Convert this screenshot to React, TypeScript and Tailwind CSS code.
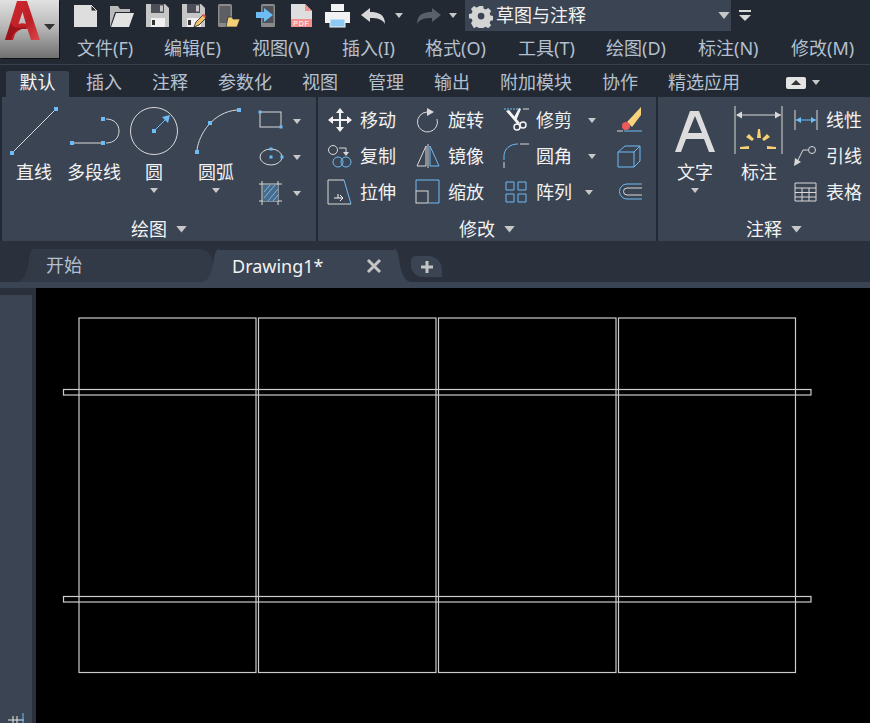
import type { ReactNode } from "react";

const blue = "#6cbcf5";
const grey = "#d9d9d9";

function Caret({ className = "", size = 8 }: { className?: string; size?: number }) {
  return (
    <svg width={size} height={size / 2 + 1} viewBox="0 0 8 5" className={className}>
      <path d="M0 0h8L4 5z" fill="#c8c8c8" />
    </svg>
  );
}

function Dot({ x, y, s = 4 }: { x: number; y: number; s?: number }) {
  return <rect x={x - s / 2} y={y - s / 2} width={s} height={s} fill={blue} />;
}

function Logo() {
  return (
    <div className="relative h-[58px] w-[59px] shrink-0 bg-gradient-to-b from-[#e2e2e2] via-[#b4b4b4] to-[#707070] shadow-[1px_1px_0_#111]">
      <svg width="46" height="44" viewBox="0 0 46 44" className="absolute left-0 top-0">
        <defs>
          <linearGradient id="logoA" x1="0" y1="0" x2="1" y2="1">
            <stop offset="0" stopColor="#d22a30" />
            <stop offset="0.6" stopColor="#bd1f26" />
            <stop offset="1" stopColor="#d84a4c" />
          </linearGradient>
        </defs>
        <path
          fillRule="evenodd"
          d="M17 1h10l13 39h-9l-3.500-11c-5.500-1-9.500 1-12.500 5l-2 6H5zM22.500 12l-4 12c2.500-1 5.500-1 7.500 0z"
          fill="url(#logoA)"
        />
        <path d="M5 40l6-17c2 6 7 5 15 4v2c-6-1-10 1-13 5l-2 6z" fill="#9a1419" />
      </svg>
      <svg width="11" height="6" viewBox="0 0 11 6" className="absolute left-[44px] top-[24px]">
        <path d="M0 0h11L5.500 6z" fill="#333" />
      </svg>
    </div>
  );
}

function Floppy({ children }: { children?: ReactNode }) {
  return (
    <svg width="25" height="25" viewBox="0 0 25 25">
      <path d="M1 1h19l4 4v19H1z" fill="#c6c6c6" />
      <rect x="6" y="1" width="13" height="9" fill="#4a4f58" />
      <rect x="15" y="2.500" width="3" height="6" fill="#c6c6c6" />
      <rect x="6" y="15" width="14" height="9" fill="#f0f0f0" />
      <rect x="7" y="17" width="3" height="5" fill="#333" />
      {children}
    </svg>
  );
}

function QuickBar() {
  return (
    <div className="flex h-[31px] items-center">
      <div className="flex w-[406px] items-center pl-[14px]">
        <svg width="25" height="25" viewBox="0 0 25 25" className="mr-[11px]">
          <path d="M1 2h17l6 6v16H1z" fill="#dedede" />
          <path d="M18 2v6h6z" fill="#22272f" stroke="#dedede" />
        </svg>
        <svg width="25" height="25" viewBox="0 0 25 25" className="mr-[11px]">
          <path d="M1 24V3h8l2 3h10v3H6L1 24z" fill="#b9b9b9" />
          <path d="M7 10h18l-5 14H2z" fill="#e2e2e2" />
        </svg>
        <div className="mr-[11px] flex">
          <Floppy />
        </div>
        <div className="mr-[12px] flex">
          <Floppy>
            <path d="M13 24l2-5 7-7 3 3-7 7z" fill="#f0c36a" stroke="#222" strokeWidth=".8" />
            <path d="M21 12l2-1 2 2-1 2z" fill="#e4524d" />
          </Floppy>
        </div>
        <svg width="22" height="25" viewBox="0 0 22 25" className="mr-[16px]">
          <rect x="0" y="1" width="14" height="23" rx="1.500" fill="#8a8a8a" />
          <rect x="1.500" y="3" width="11" height="17" fill="#5d5f64" />
          <path d="M10 14h4l1 2h7l-3 8H8z" fill="#f4cf76" stroke="#22272f" strokeWidth=".7" />
        </svg>
        <svg width="20" height="25" viewBox="0 0 20 25" className="mr-[14px]">
          <rect x="5" y="1" width="14" height="23" rx="1.500" fill="#8a8a8a" />
          <rect x="6.500" y="3" width="11" height="17" fill="#4e5158" />
          <path d="M0 9h8V5l9 7-9 7v-4H0z" fill={blue} />
        </svg>
        <svg width="23" height="25" viewBox="0 0 23 25" className="mr-[12px]">
          <path d="M1 1h14l7 7v10H1z" fill="#dedede" />
          <path d="M15 1l7 7h-7z" fill="#f28f8f" />
          <rect x="1" y="16" width="21" height="8" fill="#f28f8f" />
          <text x="11.500" y="23" fontSize="7" fill="#fff" textAnchor="middle" fontFamily="Liberation Sans" letterSpacing=".8">PDF</text>
        </svg>
        <svg width="25" height="25" viewBox="0 0 25 25" className="mr-[11px]">
          <rect x="6" y="1" width="13" height="7" fill="#f2f2f2" />
          <path d="M0 9h25v11h-5v-4H5v4H0z" fill="#f2f2f2" />
          <rect x="5" y="16" width="15" height="8" fill="#8cc9f5" stroke="#f2f2f2" />
        </svg>
        <svg width="26" height="18" viewBox="0 0 26 18" className="mr-[8px]">
          <path d="M0 8l9-7v4c8 0 15 2 15 12-3-5-7-6-15-6v4z" fill="#d8d8d8" />
        </svg>
        <Caret className="mr-[12px]" />
        <svg width="26" height="18" viewBox="0 0 26 18" className="mr-[8px]">
          <path d="M26 8l-9-7v4C9 5 2 7 2 17c3-5 7-6 15-6v4z" fill="#5a5f68" />
        </svg>
        <Caret />
      </div>
      <div className="flex h-[31px] w-[266px] items-center bg-[#3b4453] pl-[4px] text-[18px] text-[#f2f2f2]">
        <svg width="24" height="24" viewBox="0 0 24 24" className="mr-[3px] shrink-0">
          <path
            fillRule="evenodd"
            d="M9.500 0h5l.7 3.300 2.400 1 2.900-1.800 3.500 3.500-1.800 2.900 1 2.400 3.300.7v5l-3.300.7-1 2.400 1.800 2.900-3.500 3.500-2.900-1.800-2.400 1-.7 3.300h-5l-.7-3.300-2.400-1-2.900 1.800L0 20.500l1.800-2.900-1-2.400L-2.500 14.500v-5l3.300-.7 1-2.400L0 3.500 3.500 0l2.900 1.800 2.400-1zM12 8a4 4 0 100 8 4 4 0 000-8z"
            fill="#d4d4d4"
            transform="translate(2 2) scale(.84)"
          />
        </svg>
        <span className="flex-1">草图与注释</span>
        <Caret className="mr-[1px]" size={12} />
      </div>
      <svg width="14" height="12" viewBox="0 0 14 12" className="ml-[7px]">
        <rect x="1" y="0" width="12" height="2" fill="#d8d8d8" />
        <path d="M1 5h12l-6 6z" fill="#d8d8d8" />
      </svg>
    </div>
  );
}

const menus: [string, string][] = [
  ["文件(F)", "w-[87px]"],
  ["编辑(E)", "w-[88px]"],
  ["视图(V)", "w-[90px]"],
  ["插入(I)", "w-[83px]"],
  ["格式(O)", "w-[93px]"],
  ["工具(T)", "w-[88px]"],
  ["绘图(D)", "w-[92px]"],
  ["标注(N)", "w-[93px]"],
  ["修改(M)", "w-[70px]"],
];

function MenuBar() {
  return (
    <div className="flex h-[33px] items-center pl-[18px] pt-[2px] text-[18px] text-[#b4c0cf]">
      {menus.map(([m, w]) => (
        <span key={m} className={`shrink-0 whitespace-nowrap ${w}`}>
          {m}
        </span>
      ))}
    </div>
  );
}

const tabs = ["插入", "注释", "参数化", "视图", "管理", "输出", "附加模块", "协作", "精选应用"];

function RibbonTabs() {
  return (
    <div className="flex h-[33px] items-end border-t border-[#38404e] pl-[6px] text-[18px] text-[#b4c0cf]">
      <div className="flex h-[26px] w-[63px] items-center justify-center rounded-t-[3px] bg-[#3b4453] pb-[3px] text-[#f4f4f4]">默认</div>
      <div className="flex h-[26px] items-center gap-[30px] pb-[3px] pl-[17px]">
        {tabs.map((t) => (
          <span key={t} className="whitespace-nowrap">{t}</span>
        ))}
        <span className="flex items-center gap-[6px] pl-[16px]">
          <svg width="20" height="12" viewBox="0 0 20 12">
            <rect width="20" height="12" rx="2" fill="#e4e4e4" />
            <path d="M5 8l5-5 5 5z" fill="#333" />
          </svg>
          <Caret />
        </span>
      </div>
    </div>
  );
}

function BigTool({ icon, label, w, caret }: { icon: ReactNode; label: string; w: string; caret?: boolean }) {
  return (
    <div className={`flex flex-col items-center ${w}`}>
      <div className="flex h-[58px] items-center justify-center">{icon}</div>
      <span className="mt-[-1px] whitespace-nowrap leading-[26px]">{label}</span>
      {caret && <Caret className="mt-[3px]" />}
    </div>
  );
}

function SmallTool({ icon, label, caret, w }: { icon: ReactNode; label: string; caret?: string; w: string }) {
  return (
    <div className={`flex h-[36px] items-center ${w}`}>
      <div className="flex w-[28px] shrink-0 justify-center">{icon}</div>
      <span className="ml-[6px] whitespace-nowrap">{label}</span>
      {caret && <Caret className={`shrink-0 ${caret}`} />}
    </div>
  );
}

function Panel({ title, w, titleClass = "", children }: { title: string; w: string; titleClass?: string; children: ReactNode }) {
  return (
    <div className={`flex h-[144px] shrink-0 flex-col bg-[#3b4453] ${w}`}>
      <div className="flex h-[119px] overflow-hidden pt-[5px]">{children}</div>
      <div className={`flex h-[25px] items-center justify-center gap-[9px] pt-[2px] ${titleClass}`}>
        <span>{title}</span>
        <Caret size={11} />
      </div>
    </div>
  );
}

function DrawPanel() {
  return (
    <Panel title="绘图" w="w-[314px]">
      <div className="flex">
        <BigTool
          w="w-[64px]"
          label="直线"
          icon={
            <svg width="52" height="50" viewBox="0 0 52 50">
              <line x1="6" y1="45" x2="46" y2="5" stroke={grey} />
              <Dot x={4} y={47} />
              <Dot x={48} y={3} />
            </svg>
          }
        />
        <BigTool
          w="w-[56px]"
          label="多段线"
          icon={
            <svg width="52" height="40" viewBox="0 0 52 40">
              <path d="M5 32h29M38 8c8 0 13 5 13 12s-5 12-13 12" fill="none" stroke={grey} />
              <Dot x={4} y={32} />
              <Dot x={35} y={32} />
              <Dot x={35} y={8} />
            </svg>
          }
        />
        <BigTool
          w="w-[64px]"
          label="圆"
          caret
          icon={
            <svg width="50" height="50" viewBox="0 0 50 50">
              <circle cx="25" cy="25" r="23.500" fill="none" stroke={grey} />
              <path d="M25 25L39 11" stroke={blue} />
              <path d="M41 9l-2 8-6-6z" fill={blue} />
              <Dot x={25} y={25} />
            </svg>
          }
        />
        <BigTool
          w="w-[60px]"
          label="圆弧"
          caret
          icon={
            <svg width="50" height="50" viewBox="0 0 50 50">
              <path d="M6 44C8 28 22 6 46 4" fill="none" stroke={grey} />
              <Dot x={6} y={46} />
              <Dot x={19} y={17} />
              <Dot x={48} y={4} />
            </svg>
          }
        />
      </div>
      <div className="mt-[1px] flex flex-col pl-[12px]">
        {[
          <svg key="r" width="26" height="24" viewBox="0 0 26 24">
            <rect x="2" y="3" width="21" height="15" fill="none" stroke={grey} />
            <Dot x={2} y={3} s={3} />
            <Dot x={23} y={18} s={3} />
          </svg>,
          <svg key="e" width="26" height="24" viewBox="0 0 26 24">
            <ellipse cx="13" cy="12" rx="11" ry="8" fill="none" stroke={grey} />
            <Dot x={13} y={12} s={3} />
            <Dot x={13} y={4} s={3} />
            <Dot x={24} y={12} s={3} />
          </svg>,
          <svg key="h" width="26" height="26" viewBox="0 0 26 26">
            <path d="M4 1v24M20 1v24M1 4h23M1 21h23" stroke={grey} />
            <path d="M5 5h15v16H5z" fill="#4b6a87" />
            <path d="M6 12l6-7M6 18l11-13M10 21l10-12M15 21l5-6" stroke={blue} />
          </svg>,
        ].map((ic, i) => (
          <div key={i} className="flex h-[36px] items-center gap-[9px]">
            <div className="flex w-[26px] justify-center">{ic}</div>
            <Caret />
          </div>
        ))}
      </div>
    </Panel>
  );
}

function ModifyPanel() {
  return (
    <Panel title="修改" w="w-[338px]">
      <div className="flex flex-col pl-[8px]">
        <SmallTool
          label="移动"
          w="w-[88px]"
          icon={
            <svg width="24" height="24" viewBox="0 0 24 24">
              <path d="M12 0l4 5h-3v6h6V8l5 4-5 4v-3h-6v6h3l-4 5-4-5h3v-6H5v3l-5-4 5-4v3h6V5H8z" fill="#f2f2f2" />
            </svg>
          }
        />
        <SmallTool
          label="复制"
          w="w-[88px]"
          icon={
            <svg width="26" height="24" viewBox="0 0 26 24">
              <circle cx="6" cy="6" r="4.500" fill="none" stroke={grey} />
              <path d="M12 4h7v5" fill="none" stroke={grey} />
              <path d="M16 8h6l-3 4z" fill={grey} />
              <circle cx="11" cy="18" r="5" fill="none" stroke={blue} />
              <circle cx="19" cy="18" r="5" fill="none" stroke={blue} />
            </svg>
          }
        />
        <SmallTool
          label="拉伸"
          w="w-[88px]"
          icon={
            <svg width="26" height="26" viewBox="0 0 26 26">
              <path d="M11 25H1V1h10" fill="none" stroke={grey} />
              <path d="M11 25h13" stroke={grey} />
              <path d="M17 1l7 24" stroke={blue} />
              <path d="M11 1h6" stroke={grey} />
              <path d="M7 19h9M13 16l3 3-3 3M11 15v4" fill="none" stroke="#f2f2f2" />
            </svg>
          }
        />
      </div>
      <div className="flex flex-col">
        <SmallTool
          label="旋转"
          w="w-[88px]"
          icon={
            <svg width="24" height="26" viewBox="0 0 24 26">
              <path d="M11 5A10 10 0 1021 12" fill="none" stroke={grey} />
              <path d="M11 1l7 4-7 4z" fill={grey} />
            </svg>
          }
        />
        <SmallTool
          label="镜像"
          w="w-[88px]"
          icon={
            <svg width="24" height="24" viewBox="0 0 24 24">
              <path d="M10 2v20H1z" fill="none" stroke={grey} />
              <path d="M14 2l9 20h-9z" fill="none" stroke={blue} />
              <path d="M12 0v24" stroke={grey} />
            </svg>
          }
        />
        <SmallTool
          label="缩放"
          w="w-[88px]"
          icon={
            <svg width="26" height="26" viewBox="0 0 26 26">
              <path d="M1 12V1h23v23H14" fill="none" stroke={blue} />
              <rect x="1" y="12" width="12" height="12" fill="none" stroke={grey} />
            </svg>
          }
        />
      </div>
      <div className="flex flex-col">
        <SmallTool
          label="修剪"
          w="w-[115px]"
          caret="ml-[16px]"
          icon={
            <svg width="26" height="26" viewBox="0 0 26 26">
              <path d="M1 2h16" stroke={blue} strokeDasharray="2 1" />
              <path d="M20 2h6" stroke={grey} />
              <path d="M3 4l3-1 11 13-2 2zM16 1l2 1-5 12-3-2z" fill="#f4f4f4" />
              <circle cx="14" cy="20" r="3" fill="none" stroke="#f4f4f4" strokeWidth="1.500" />
              <circle cx="20" cy="18" r="3" fill="none" stroke="#f4f4f4" strokeWidth="1.500" />
            </svg>
          }
        />
        <SmallTool
          label="圆角"
          w="w-[115px]"
          caret="ml-[16px]"
          icon={
            <svg width="26" height="26" viewBox="0 0 26 26">
              <path d="M1 17V13C1 6 7 1 15 1" fill="none" stroke={blue} />
              <path d="M17 1h9M1 19v6" stroke={grey} />
            </svg>
          }
        />
        <SmallTool
          label="阵列"
          w="w-[115px]"
          caret="ml-[13px]"
          icon={
            <svg width="22" height="22" viewBox="0 0 22 22">
              <path d="M1 1h8v8H1zM13 1h8v8h-8zM1 13h8v8H1zM13 13h8v8h-8z" fill="none" stroke={blue} />
            </svg>
          }
        />
      </div>
      <div className="flex flex-col">
        <div className="flex h-[36px] items-center">
          <svg width="26" height="26" viewBox="0 0 26 26">
            <path d="M0 24h6" stroke={grey} />
            <path d="M7 24h18" stroke={blue} />
            <path d="M10 15L24 0v8L15 20z" fill="#f7d37c" />
            <circle cx="9" cy="19" r="4" fill="#ee5a5a" />
          </svg>
        </div>
        <div className="flex h-[36px] items-center">
          <svg width="24" height="24" viewBox="0 0 24 24">
            <path d="M1 8h16v15H1zM1 8l7-6h15l-6 6M23 2v15l-6 6" fill="none" stroke={blue} />
          </svg>
        </div>
        <div className="flex h-[36px] items-center">
          <svg width="26" height="22" viewBox="0 0 26 22">
            <path d="M25 3H10a7.500 7.500 0 000 15h15" fill="none" stroke={blue} />
            <path d="M25 7H10a3.500 3.500 0 000 7h15" fill="none" stroke={grey} />
          </svg>
        </div>
      </div>
    </Panel>
  );
}

function AnnotatePanel() {
  return (
    <Panel title="注释" w="w-[212px]" titleClass="pl-[20px]">
      <BigTool
        w="w-[74px]"
        label="文字"
        caret
        icon={
          <svg width="42" height="46" viewBox="0 0 42 46">
            <path d="M1 44L16 3h9l16 41h-6l-5-13H12L7 44zM14 25h14L21 8z" fill="#dcdcdc" />
          </svg>
        }
      />
      <BigTool
        w="w-[54px]"
        label="标注"
        icon={
          <svg width="50" height="50" viewBox="0 0 50 50">
            <path d="M1 0v48M48 0v48" stroke={grey} />
            <path d="M3 9h44" stroke={grey} />
            <path d="M2 9l6-3.500v7zM47 9l-6-3.500v7z" fill={grey} />
            <path d="M24 23h2l1 9h-4zM12 31l3-3 5 5-2 2zM36 31l-3-3-5 5 2 2zM6 41l9-1v3H6zM33 40l9 1v2h-9z" fill="#f7cf75" />
          </svg>
        }
      />
      <div className="flex flex-col pl-[6px]">
        <SmallTool
          label="线性"
          w="w-[78px]"
          icon={
            <svg width="24" height="22" viewBox="0 0 24 22">
              <path d="M1 1v20M23 1v20" stroke={grey} />
              <path d="M2 11h20" stroke={blue} />
              <path d="M2 11l5-3v6zM22 11l-5-3v6z" fill={blue} />
            </svg>
          }
        />
        <SmallTool
          label="引线"
          w="w-[78px]"
          icon={
            <svg width="24" height="20" viewBox="0 0 24 20">
              <circle cx="18" cy="4" r="3.500" fill="none" stroke={grey} />
              <path d="M14 4h-5L3 16" fill="none" stroke={grey} />
              <path d="M0 20l1-8 6 4z" fill={grey} />
            </svg>
          }
        />
        <SmallTool
          label="表格"
          w="w-[78px]"
          icon={
            <svg width="24" height="20" viewBox="0 0 24 20">
              <path d="M1 1h21v18H1zM1 6h21M1 10.500h21M1 15h21M8 6v13M15 6v13" fill="none" stroke={grey} />
            </svg>
          }
        />
      </div>
    </Panel>
  );
}

// curved foot on either side of a document tab
function Flare({ className, color, flip }: { className: string; color: string; flip?: boolean }) {
  return (
    <svg width="18" height="33" viewBox="0 0 18 33" className={className}>
      <path
        d={flip ? "M0 0c3 0 4 4 5 10s3 23 13 23H0z" : "M18 0c-3 0-4 4-5 10S10 33 0 33h18z"}
        fill={color}
      />
    </svg>
  );
}

function DocTabs() {
  return (
    <div className="flex h-[47px] items-end border-b-[6px] border-[#3b4453] bg-[#2a303c]">
      <div className="relative ml-[33px] flex h-[33px] w-[180px] items-center rounded-tr-[14px] bg-[#323a47] pl-[13px] text-[#b4c0cf]">
        <Flare className="absolute bottom-0 left-[-17px]" color="#323a47" />
        开始
      </div>
      <div className="relative ml-[5px] flex h-[32px] w-[177px] items-center bg-[#3b4453] pl-[14px] text-[#f2f2f2]">
        <Flare className="absolute bottom-0 left-[-17px]" color="#3b4453" />
        <Flare className="absolute bottom-0 right-[-17px]" color="#3b4453" flip />
        <span className="flex-1">Drawing1*</span>
        <svg width="16" height="16" viewBox="0 0 16 16" className="mr-[13px]">
          <path d="M2 2l12 12M14 2L2 14" stroke="#c4c4c4" strokeWidth="3" />
        </svg>
      </div>
      <div className="mb-[5px] ml-[16px] flex h-[21px] w-[31px] items-center justify-center rounded-tl-[5px] rounded-tr-[14px] rounded-bl-[12px] bg-[#3b4453]">
        <svg width="12" height="12" viewBox="0 0 12 12">
          <path d="M6 0v12M0 6h12" stroke="#c4c4c4" strokeWidth="3" />
        </svg>
      </div>
    </div>
  );
}

function Drawing() {
  const cells = [79, 258.500, 438.500, 618.500];
  const w = [177, 177.500, 177.500, 177];
  return (
    <svg viewBox="36 288 834 435" className="block h-full w-full">
      <g fill="none" stroke="#cccccc" strokeWidth="1.200">
        {cells.map((x, i) => (
          <rect key={x} x={x} y={318} width={w[i]} height={354.500} />
        ))}
        <rect x="63.500" y="389.500" width="747.500" height="5.500" />
        <rect x="63.500" y="596.500" width="747.500" height="5.500" />
      </g>
    </svg>
  );
}

function Canvas() {
  return (
    <div className="flex flex-1 overflow-hidden">
      <div className="flex w-[36px] shrink-0 flex-col bg-[#2a303c] pt-[7px]">
        <div className="flex w-[32px] flex-1 items-end justify-center bg-[#3b4453]">
          <svg width="16" height="10" viewBox="0 0 16 10">
            <path d="M0 7h16M5 3v7M9 3v7" stroke="#e8e8e8" />
            <path d="M15 0v10" stroke={blue} />
          </svg>
        </div>
      </div>
      <div className="flex-1 bg-black">
        <Drawing />
      </div>
    </div>
  );
}

export default function App() {
  return (
    <div
      className="flex h-[723px] w-[870px] flex-col overflow-hidden bg-[#222933] text-[18px] text-[#f2f2f2]"
      style={{ fontFamily: '"Noto Sans", "Noto Sans CJK SC", sans-serif' }}
    >
      <div className="flex h-[64px]">
        <Logo />
        <div className="flex-1">
          <QuickBar />
          <MenuBar />
        </div>
      </div>
      <RibbonTabs />
      <div className="flex gap-[2px] pl-[2px]">
        <DrawPanel />
        <ModifyPanel />
        <AnnotatePanel />
      </div>
      <DocTabs />
      <Canvas />
    </div>
  );
}
